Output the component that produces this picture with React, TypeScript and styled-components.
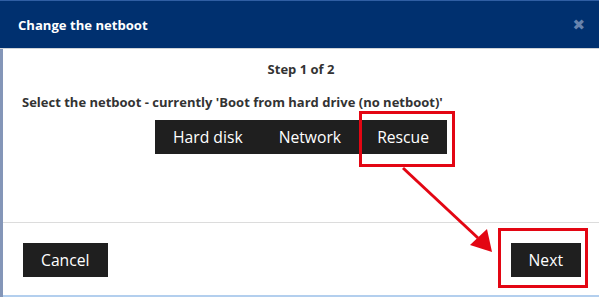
import React from "react";
import styled, { createGlobalStyle } from "styled-components";

const Global = createGlobalStyle`
  html, body { margin: 0; padding: 0; background: #ffffff; }
  body { font-family: "Open Sans", "Noto Sans", sans-serif; }
  * { box-sizing: border-box; }
`;

const Page = styled.div`
  position: relative;
  width: 599px;
  height: 297px;
  display: flex;
  overflow: hidden;
`;

const Strip = styled.div`
  width: 3px;
  background: #8496b8;
  flex: none;
`;

const Modal = styled.div`
  flex: 1;
  display: flex;
  flex-direction: column;
  background: #ffffff;
  border-bottom: 2px solid #b3cfee;
`;

const Header = styled.div`
  height: 49px;
  flex: none;
  background: #00306f;
  border-top: 1px solid #2f5ea3;
  border-bottom: 1px solid #cfd3d8;
  display: flex;
  align-items: center;
  justify-content: space-between;
  padding: 0 14px 0 18px;
  margin-left: -3px;
`;

const Title = styled.h4`
  margin: 0;
  color: #ffffff;
  font-size: 13.1px;
  font-weight: 700;
  line-height: 20px;
`;

const Close = styled.span`
  color: #6783ad;
  font-size: 15px;
  font-weight: 700;
  line-height: 20px;
  font-family: "DejaVu Sans", sans-serif;
`;

const Body = styled.div`
  height: 174px;
  flex: none;
  border-bottom: 1px solid #dcdcdc;
  padding: 10px 19px 0;
  display: flex;
  flex-direction: column;
`;

const Step = styled.p`
  margin: 0;
  text-align: center;
  font-size: 13px;
  font-weight: 700;
  color: #333333;
  line-height: 20px;
`;

const Prompt = styled.p`
  margin: 13px 0 0;
  font-size: 13px;
  font-weight: 700;
  color: #333333;
  line-height: 20px;
`;

const Group = styled.div`
  margin: 8px 0 0 133px;
  display: flex;
  align-self: flex-start;
`;

const Wrap = styled.div`
  position: relative;
  display: flex;
`;

const Btn = styled.button`
  border: none;
  background: #1f1f1f;
  color: #ffffff;
  font-family: "Open Sans", sans-serif;
  font-size: 15.7px;
  height: 34px;
  padding: 0 18px;
  cursor: pointer;
  line-height: 34px;
`;

const Highlight = styled.span<{ $t: number; $r: number; $b: number; $l: number }>`
  position: absolute;
  top: ${(p) => p.$t}px;
  right: ${(p) => p.$r}px;
  bottom: ${(p) => p.$b}px;
  left: ${(p) => p.$l}px;
  border: 3px solid #e30613;
  pointer-events: none;
`;

const Footer = styled.div`
  flex: 1;
  display: flex;
  justify-content: space-between;
  align-items: flex-start;
  padding: 20px 18px 0 20px;
`;

const Arrow = styled.svg`
  position: absolute;
  left: 0;
  top: 0;
  pointer-events: none;
`;

export default function App() {
  return (
    <>
      <Global />
      <Page>
        <Strip />
        <Modal>
          <Header>
            <Title>Change the netboot</Title>
            <Close>✖</Close>
          </Header>
          <Body>
            <Step>Step 1 of 2</Step>
            <Prompt>Select the netboot - currently 'Boot from hard drive (no netboot)'</Prompt>
            <Group>
              <Btn>Hard disk</Btn>
              <Btn>Network</Btn>
              <Wrap>
                <Btn>Rescue</Btn>
                <Highlight $t={-9} $r={-8} $b={-13} $l={0} />
              </Wrap>
            </Group>
          </Body>
          <Footer>
            <Btn>Cancel</Btn>
            <Wrap>
              <Btn>Next</Btn>
              <Highlight $t={-15} $r={-7} $b={-11} $l={-13} />
            </Wrap>
          </Footer>
        </Modal>
        <Arrow width="599" height="297" viewBox="0 0 599 297">
          <line x1="403" y1="168" x2="478" y2="238" stroke="#e30613" strokeWidth="3" />
          <polygon points="492,252 470,245 487,229" fill="#e30613" />
        </Arrow>
      </Page>
    </>
  );
}
